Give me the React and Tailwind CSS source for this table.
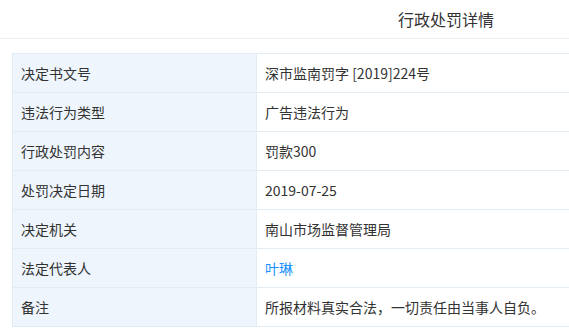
const rows = [
  { label: '决定书文号', value: '深市监南罚字 [2019]224号' },
  { label: '违法行为类型', value: '广告违法行为' },
  { label: '行政处罚内容', value: '罚款300' },
  { label: '处罚决定日期', value: '2019-07-25' },
  { label: '决定机关', value: '南山市场监督管理局' },
  { label: '法定代表人', value: '叶琳', link: true },
  { label: '备注', value: '所报材料真实合法，一切责任由当事人自负。' },
];

export default function App() {
  return (
    <div
      className="w-[569px] h-[336px] overflow-hidden bg-white text-[#333]"
      style={{ fontFamily: '"Noto Sans CJK SC", "Microsoft YaHei", sans-serif' }}
    >
      <div className="h-[39px] border-b border-[#eef0f3] flex items-center pl-[398px]">
        <span className="text-[16px] text-[#333] whitespace-nowrap">行政处罚详情</span>
      </div>
      <div className="pl-[12px] pt-[14px]">
        <table className="w-[720px] border-collapse text-[14px]">
          <tbody>
            {rows.map((r) => (
              <tr key={r.label} className="h-[39px]">
                <td className="w-[244px] border border-[#e3ebf3] bg-[#eef5fc] pl-[8px] whitespace-nowrap">
                  {r.label}
                </td>
                <td className="border border-[#e3ebf3] pl-[8px] whitespace-nowrap">
                  {r.link ? <span className="text-[#1890ff]">{r.value}</span> : r.value}
                </td>
              </tr>
            ))}
          </tbody>
        </table>
      </div>
    </div>
  );
}
